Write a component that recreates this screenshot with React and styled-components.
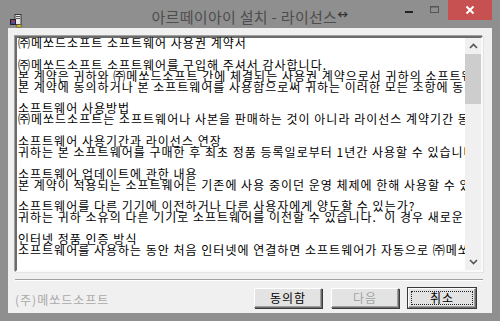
import React from 'react';
import styled, { createGlobalStyle } from 'styled-components';

const GlobalStyle = createGlobalStyle`
  html, body {
    margin: 0;
    padding: 0;
    background: #8f8f8f;
  }
  body {
    font-family: "Noto Sans CJK KR", "Liberation Sans", sans-serif;
  }
`;

const Window = styled.div`
  width: 500px;
  height: 321px;
  background: #8f8f8f;
  display: flex;
  flex-direction: column;
  box-sizing: border-box;
`;

const TitleBar = styled.div`
  height: 28px;
  position: relative;
  display: flex;
  align-items: flex-start;
`;

const AppIcon = styled.div`
  width: 14px;
  height: 14px;
  margin: 9px 0 0 10px;
`;

const Title = styled.div`
  position: absolute;
  left: 0;
  right: 0;
  top: 4px;
  text-align: center;
  font-size: 15px;
  line-height: 20px;
  color: #4d4d4d;
  letter-spacing: 0.3px;
`;

const Arrow = styled.span`
  font-size: 11px;
  font-weight: bold;
  vertical-align: 4px;
  color: #333;
`;

const Controls = styled.div`
  margin-left: auto;
  display: flex;
  align-items: flex-start;
  height: 20px;
  margin-right: 8px;
`;

const CtrlButton = styled.div`
  width: ${p => p.$w}px;
  height: 20px;
  display: flex;
  align-items: center;
  justify-content: center;
  background: ${p => (p.$close ? '#c75050' : 'transparent')};
`;

const Client = styled.div`
  flex: 1;
  margin: 0 8px 8px 8px;
  background: #f0f0f0;
  display: flex;
  flex-direction: column;
  padding: 8px 9px 0 7px;
`;

const TextBox = styled.div`
  height: 236px;
  box-sizing: border-box;
  background: #fff;
  border-top: 2px solid #6b6b6b;
  border-left: 2px solid #6b6b6b;
  border-right: 2px solid #fafafa;
  border-bottom: 2px solid #fafafa;
  box-shadow: -1px -1px 0 #a0a0a0, 1px 1px 0 #e3e3e3;
  display: flex;
`;

const Content = styled.div`
  flex: 1;
  min-width: 0;
  overflow-x: clip;
  overflow-y: visible;
  padding: 0 0 0 1px;
  font-size: 12px;
  line-height: 10.9px;
  letter-spacing: 1px;
  color: #000;
  white-space: pre;
`;

const Line = styled.div`
  height: 10.9px;
`;

const ScrollBar = styled.div`
  width: 16px;
  flex-shrink: 0;
  background: #f0f0f0;
  display: flex;
  flex-direction: column;
`;

const ScrollArrow = styled.div`
  height: 16px;
  display: flex;
  align-items: center;
  justify-content: center;
`;

const Thumb = styled.div`
  height: 50px;
  background: #cdcdcd;
`;

const Track = styled.div`
  flex: 1;
`;

const Separator = styled.div`
  margin-top: 7px;
  height: 1px;
  background: #a0a0a0;
  border-bottom: 1px solid #fff;
`;

const Footer = styled.div`
  display: flex;
  align-items: center;
  margin-top: 7px;
`;

const Brand = styled.div`
  font-size: 12px;
  letter-spacing: 1px;
  color: #a9a9a9;
  margin-top: 3px;
`;

const Buttons = styled.div`
  margin-left: auto;
  display: flex;
  gap: 9px;
  margin-right: 7px;
`;

const Button = styled.button`
  width: 68px;
  height: 20px;
  box-sizing: border-box;
  padding: 0;
  font-family: "Noto Sans CJK KR", "Liberation Sans", sans-serif;
  font-size: 12px;
  letter-spacing: 1px;
  line-height: 14px;
  background: #e3e3e3;
  color: ${p => (p.disabled ? '#a3a3a3' : '#000')};
  border: 1px solid;
  border-color: #fff #6b6b6b #6b6b6b #fff;
  box-shadow: ${p =>
    p.$default
      ? '0 0 0 1px #3a3a3a, inset -1px -1px 0 #a0a0a0'
      : 'inset -1px -1px 0 #a0a0a0, 1px 1px 0 #3a3a3a'};
  outline: ${p => (p.$default ? '1px dotted #222' : 'none')};
  outline-offset: -4px;
`;

const lines = [
  '㈜메쏘드소프트 소프트웨어 사용권 계약서',
  '',
  '㈜메쏘드소프트 소프트웨어를 구입해 주셔서 감사합니다.',
  '본 계약은 귀하와 ㈜메쏘드소프트 간에 체결되는 사용권 계약으로서 귀하의 소프트웨어 사용에 적용됩니다.',
  '본 계약에 동의하거나 본 소프트웨어를 사용함으로써 귀하는 이러한 모든 조항에 동의하게 됩니다.',
  '',
  '소프트웨어 사용방법',
  '㈜메쏘드소프트는 소프트웨어나 사본을 판매하는 것이 아니라 라이선스 계약기간 동안 사용권을 부여합니다.',
  '',
  '소프트웨어 사용기간과 라이선스 연장',
  '귀하는 본 소프트웨어를 구매한 후 최초 정품 등록일로부터 1년간 사용할 수 있습니다.',
  '',
  '소프트웨어 업데이트에 관한 내용',
  '본 계약이 적용되는 소프트웨어는 기존에 사용 중이던 운영 체제에 한해 사용할 수 있습니다.',
  '',
  '소프트웨어를 다른 기기에 이전하거나 다른 사용자에게 양도할 수 있는가?',
  '귀하는 귀하 소유의 다른 기기로 소프트웨어를 이전할 수 있습니다.  이 경우 새로운 기기에서 다시 등록해야 합니다.',
  '',
  '인터넷 정품 인증 방식',
  '소프트웨어를 사용하는 동안 처음 인터넷에 연결하면 소프트웨어가 자동으로 ㈜메쏘드소프트에 연결됩니다.',
  '',
];

const SetupIcon = () => (
  <svg width="14" height="14" viewBox="0 0 14 14">
    <rect x="5" y="0.5" width="6" height="10" fill="#e8e8e8" stroke="#333" strokeWidth="1" />
    <rect x="6" y="2" width="4" height="1" fill="#555" />
    <rect x="6" y="4" width="4" height="1" fill="#555" />
    <rect x="0.5" y="5.5" width="5" height="5" fill="#3050c0" stroke="#222" strokeWidth="1" />
    <rect x="1.5" y="6.5" width="3" height="2" fill="#c03030" />
    <ellipse cx="9" cy="12" rx="3" ry="1.4" fill="#e0c020" stroke="#444" strokeWidth="0.6" />
  </svg>
);

const App = () => (
  <>
    <GlobalStyle />
    <Window>
      <TitleBar>
        <AppIcon>
          <SetupIcon />
        </AppIcon>
        <Title>
          아르떼이아이 설치 - 라이선스<Arrow>↔</Arrow>
        </Title>
        <Controls>
          <CtrlButton $w={26}>
            <svg width="9" height="10" viewBox="0 0 9 10">
              <rect x="0" y="6" width="8" height="2" fill="#222" />
            </svg>
          </CtrlButton>
          <CtrlButton $w={26}>
            <svg width="10" height="10" viewBox="0 0 10 10">
              <rect x="0.5" y="1.5" width="8" height="6" fill="none" stroke="#555" strokeWidth="1" />
              <rect x="0.5" y="1.5" width="8" height="1" fill="#555" />
            </svg>
          </CtrlButton>
          <CtrlButton $w={44} $close>
            <svg width="10" height="10" viewBox="0 0 10 10">
              <path d="M1.5 1.5 L8.5 8.5 M8.5 1.5 L1.5 8.5" stroke="#fff" strokeWidth="2" />
            </svg>
          </CtrlButton>
        </Controls>
      </TitleBar>
      <Client>
        <TextBox>
          <Content>
            {lines.map((l, i) => (
              <Line key={i}>{l}</Line>
            ))}
          </Content>
          <ScrollBar>
            <ScrollArrow>
              <svg width="9" height="6" viewBox="0 0 9 6">
                <path d="M1 5 L4.5 1.5 L8 5" fill="none" stroke="#555" strokeWidth="1.6" />
              </svg>
            </ScrollArrow>
            <Thumb />
            <Track />
            <ScrollArrow>
              <svg width="9" height="6" viewBox="0 0 9 6">
                <path d="M1 1 L4.5 4.5 L8 1" fill="none" stroke="#555" strokeWidth="1.6" />
              </svg>
            </ScrollArrow>
          </ScrollBar>
        </TextBox>
        <Separator />
        <Footer>
          <Brand>(주)메쏘드소프트</Brand>
          <Buttons>
            <Button>동의함</Button>
            <Button disabled>다음</Button>
            <Button $default>취소</Button>
          </Buttons>
        </Footer>
      </Client>
    </Window>
  </>
);

export default App;
